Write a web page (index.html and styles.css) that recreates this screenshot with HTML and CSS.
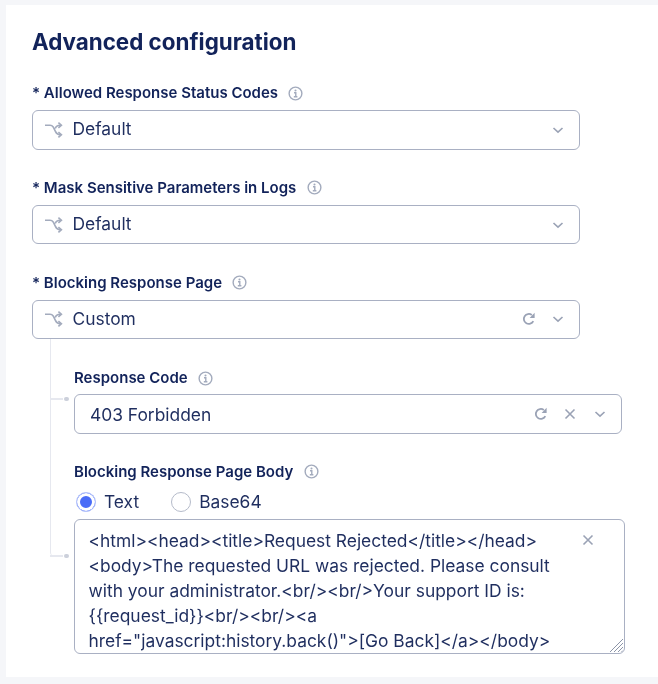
FILE: index.html
```html
<!DOCTYPE html>
<html lang="en">
<head>
<meta charset="utf-8">
<title>Advanced configuration</title>
<link rel="stylesheet" href="styles.css">
</head>
<body>
<svg class="defs" width="0" height="0" aria-hidden="true">
  <defs>
    <symbol id="i-info" viewBox="0 0 16 16"><circle cx="8" cy="8" r="6.8" fill="none" stroke="currentColor" stroke-width="1.5"/><path d="M6.4 7.2H8.3V11.4M6.2 11.5H10" fill="none" stroke="currentColor" stroke-width="1.5"/><circle cx="8" cy="4.7" r="1.1" fill="currentColor"/></symbol>
    <symbol id="i-branch" viewBox="0 0 20 20"><path d="M1 5.2H6C7.6 5.2 8.4 5.8 9.2 7L11.4 11.4C12.4 13.6 13.6 14.7 16 14.7M11.3 8.4C12 6.2 13.4 5.2 16 5.2" fill="none" stroke="currentColor" stroke-width="1.6"/><path d="M14.4 2.6L17.4 5.2L14.4 7.8M14.4 12.1L17.4 14.7L14.4 17.3" fill="none" stroke="currentColor" stroke-width="1.6"/></symbol>
    <symbol id="i-chev" viewBox="0 0 12 12"><path d="M1.5 4L6 8.2L10.5 4" fill="none" stroke="currentColor" stroke-width="1.6"/></symbol>
    <symbol id="i-x" viewBox="0 0 12 12"><path d="M1.5 1.5L10.5 10.5M10.5 1.5L1.5 10.5" fill="none" stroke="currentColor" stroke-width="1.6"/></symbol>
    <symbol id="i-reset" viewBox="0 0 14 14"><path d="M11.3 9.2A5 5 0 1 1 9.8 2.9" fill="none" stroke="currentColor" stroke-width="1.8"/><path d="M12.6 0.8V6H7.6Z" fill="currentColor"/></symbol>
  </defs>
</svg>
<main class="card">
  <h1 class="title">Advanced configuration</h1>
  <section class="field">
    <div class="label"><span class="req">*</span> Allowed Response Status Codes <svg class="info"><use href="#i-info"/></svg></div>
    <div class="select">
      <svg class="branch"><use href="#i-branch"/></svg>
      <span class="value">Default</span>
      <svg class="chev"><use href="#i-chev"/></svg>
    </div>
  </section>
  <section class="field">
    <div class="label"><span class="req">*</span> Mask Sensitive Parameters in Logs <svg class="info"><use href="#i-info"/></svg></div>
    <div class="select">
      <svg class="branch"><use href="#i-branch"/></svg>
      <span class="value">Default</span>
      <svg class="chev"><use href="#i-chev"/></svg>
    </div>
  </section>
  <section class="field">
    <div class="label"><span class="req">*</span> Blocking Response Page <svg class="info"><use href="#i-info"/></svg></div>
    <div class="select">
      <svg class="branch"><use href="#i-branch"/></svg>
      <span class="value">Custom</span>
      <svg class="reset"><use href="#i-reset"/></svg>
      <svg class="chev"><use href="#i-chev"/></svg>
    </div>
    <div class="children">
      <div class="child">
        <span class="connector connector-code"></span>
        <div class="label">Response Code <svg class="info"><use href="#i-info"/></svg></div>
        <div class="select select-plain">
          <span class="value">403 Forbidden</span>
          <svg class="reset"><use href="#i-reset"/></svg>
          <svg class="clear"><use href="#i-x"/></svg>
          <svg class="chev"><use href="#i-chev"/></svg>
        </div>
      </div>
      <div class="child child-body">
        <span class="connector connector-body"></span>
        <div class="label">Blocking Response Page Body <svg class="info"><use href="#i-info"/></svg></div>
        <div class="radios">
          <span class="radio"><span class="dot dot-on"></span>Text</span>
          <span class="radio"><span class="dot"></span>Base64</span>
        </div>
        <div class="textarea">
          <div class="code">&lt;html&gt;&lt;head&gt;&lt;title&gt;Request Rejected&lt;/title&gt;&lt;/head&gt;<br>&lt;body&gt;The requested URL was rejected. Please consult<br>with your administrator.&lt;br/&gt;&lt;br/&gt;Your support ID is:<br>{{request_id}}&lt;br/&gt;&lt;br/&gt;&lt;a<br>href="javascript:history.back()"&gt;[Go Back]&lt;/a&gt;&lt;/body&gt;</div>
          <svg class="clear clear-area"><use href="#i-x"/></svg>
          <svg class="grip" viewBox="0 0 16 16"><path d="M15 2L2 15M15 6L6 15M15 10L10 15M15 13.5L13.5 15" fill="none" stroke="#8d95a8" stroke-width="1"/></svg>
        </div>
      </div>
    </div>
  </section>
</main>
</body>
</html>
```
FILE: styles.css
```css
* { box-sizing: border-box; }
html, body { margin: 0; padding: 0; }
body {
  width: 658px;
  height: 684px;
  overflow: hidden;
  background: #f5f6f9;
  padding: 5px 0 7px 6px;
  font-family: Inter, "Liberation Sans", sans-serif;
  color: #1a2a5e;
}
.defs { position: absolute; }
.card {
  background: #fff;
  height: 672px;
  padding: 22px 0 0 25px;
  filter: blur(0.4px);
}
.title {
  margin: 0 0 27px 1px;
  font-size: 22.4px;
  line-height: 30px;
  font-weight: 700;
  color: #12235a;
}
.field { margin-bottom: 29.25px; }
.label {
  display: flex;
  align-items: center;
  height: 18px;
  margin-bottom: 8px;
  font-size: 15px;
  line-height: 18px;
  font-weight: 600;
  color: #12235a;
  white-space: pre;
}
.field > .label { margin-left: 1px; }
.child > .label { margin-bottom: 7px; }
.req { white-space: pre; }
.info { width: 15px; height: 15px; margin-left: 6.5px; color: #a3abbd; }
.select {
  display: flex;
  align-items: center;
  width: 549px;
  height: 39.5px;
  padding: 0 15px 0 11px;
  border: 1.6px solid #a9b0c3;
  border-radius: 6px;
  background: #fff;
}
.field > .select { width: 548.5px; margin-left: 0.5px; }
.branch { width: 20px; height: 20px; margin-right: 9px; color: #a3abbd; }
.value { flex: 1; font-size: 17.4px; line-height: 20px; margin-top: -1px; color: #1f2e5f; }
.chev { width: 12px; height: 12px; color: #9aa2b5; }
.reset { width: 14px; height: 14px; margin-right: 16px; color: #9aa2b5; }
.clear { width: 12px; height: 12px; margin-right: 18px; color: #9aa2b5; }
.children {
  margin-left: 19px;
  padding-left: 23px;
  border-left: 1.5px solid #e6e8ef;
  height: 217px;
  width: 600px;
  padding-top: 30px;
  position: relative;
  border-bottom-left-radius: 4px;
}
.child { position: static; }
.child-body { margin-top: 29px; }
.connector { position: absolute; left: -1px; width: 12.5px; height: 1.5px; background: #e6e8ef; }
.connector::after {
  content: "";
  position: absolute;
  right: -6px;
  top: -1.5px;
  width: 4.5px;
  height: 4.5px;
  border-radius: 50%;
  background: #ccd0db;
}
.connector-code { top: 59px; }
.connector-body { top: 216px; }
.select-plain { width: 548px; padding-left: 15px; }
.select-plain .value { margin-top: 1.5px; }
.radios {
  display: flex;
  gap: 32px;
  height: 22px;
  margin: 10px 0 6.5px 2px;
  align-items: center;
  font-size: 17.4px;
  color: #1f2e5f;
}
.radio { display: flex; align-items: center; gap: 8px; }
.dot { width: 20px; height: 20px; border-radius: 50%; border: 1.5px solid #b5bbca; background: #fff; }
.dot-on { border-color: #b8c6fb; background: #4a6cf7; box-shadow: inset 0 0 0 3px #fff; }
.textarea {
  position: relative;
  width: 551px;
  height: 134.5px;
  padding: 8px 60px 0 13.5px;
  border: 1.6px solid #a9b0c3;
  border-radius: 6px;
  font-size: 17.4px;
  line-height: 25px;
  color: #1f2e5f;
  overflow: hidden;
  white-space: nowrap;
}
.clear-area { position: absolute; top: 14px; right: 30px; margin: 0; }
.grip { position: absolute; right: 0; bottom: 0; width: 16px; height: 16px; }
```
